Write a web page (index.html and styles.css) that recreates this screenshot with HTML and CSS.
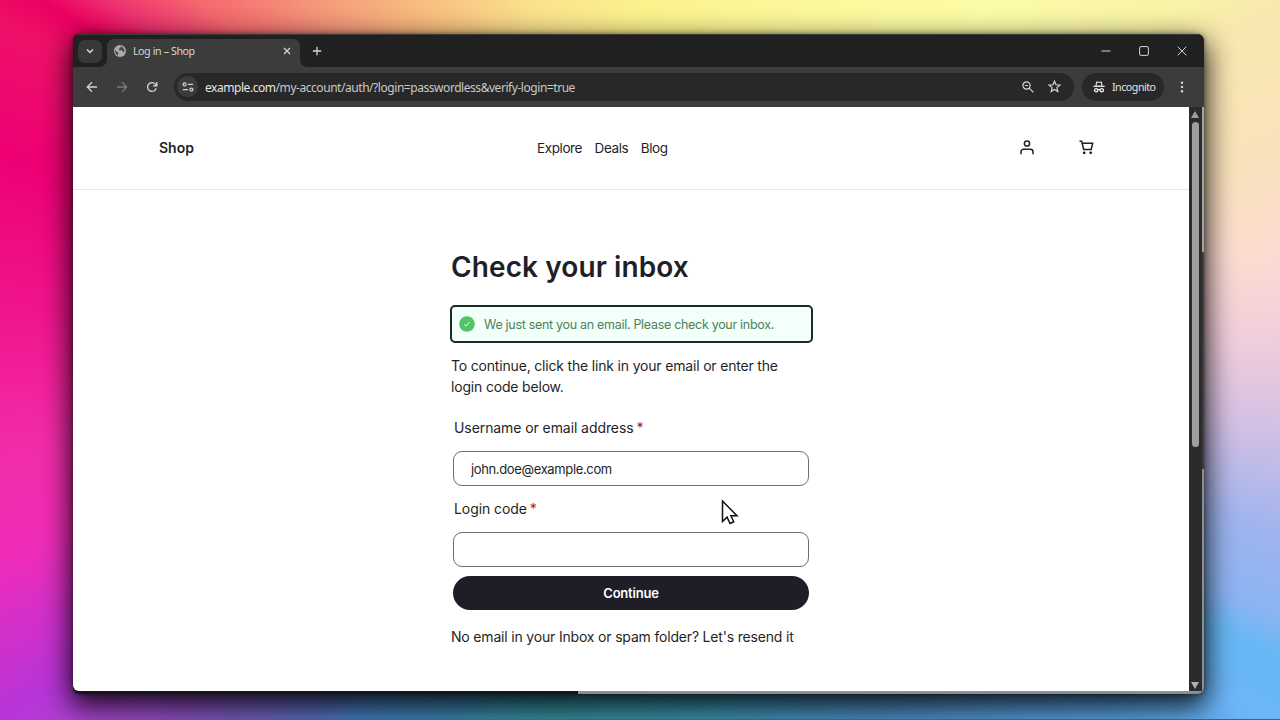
FILE: index.html
```html
<!DOCTYPE html>
<html lang="en">

<head>
    <meta charset="UTF-8">
    <meta name="viewport" content="width=device-width, initial-scale=1.0">
    <title>Log in – Shop</title>
    <link rel="stylesheet" href="styles.css">
</head>

<body>
    <div class="window">
        <div class="tab-strip">
            <div class="tab-search">
                <svg width="10" height="10" viewBox="0 0 10 10"><path d="M2 3.5l3 3 3-3" /></svg>
            </div>
            <div class="tab">
                <svg class="favicon" width="12" height="12" viewBox="0 0 12 12">
                    <circle cx="6" cy="6" r="6" />
                    <path d="M1.2 5.2l3 2.6v2.8A5 5 0 0 1 1.2 5.2zM6.6 1.2v1.4L4.8 4v1.2h3l1.2 1.6 1.4.4A5 5 0 0 0 6.6 1.2z" />
                </svg>
                <span class="tab-title">Log in – Shop</span>
                <svg class="tab-close" width="8" height="8" viewBox="0 0 8 8"><path d="M1 1l6 6M7 1L1 7" /></svg>
            </div>
            <svg class="new-tab" width="10" height="10" viewBox="0 0 10 10"><path d="M5 .8v8.4M.8 5h8.4" /></svg>
            <div class="window-buttons">
                <svg width="10" height="10" viewBox="0 0 10 10"><path d="M.5 5h9" /></svg>
                <svg width="10" height="10" viewBox="0 0 10 10"><rect x=".6" y=".6" width="8.8" height="8.8" rx="1.3" /></svg>
                <svg width="10" height="10" viewBox="0 0 10 10"><path d="M.7.7l8.6 8.6M9.3.7L.7 9.3" /></svg>
            </div>
        </div>

        <div class="toolbar">
            <div class="nav-buttons">
                <svg width="12" height="12" viewBox="0 0 12 12"><path d="M11 6H1.5M6 1.3L1.3 6 6 10.7" /></svg>
                <svg class="disabled" width="12" height="12" viewBox="0 0 12 12"><path d="M1 6h9.5M6 1.3L10.7 6 6 10.7" /></svg>
                <svg width="12" height="12" viewBox="0 0 12 12"><path d="M10.2 7.2A4.4 4.4 0 1 1 9.3 3.1L10.6 4.6M10.8 1v3.8H7" /></svg>
            </div>
            <div class="address-bar">
                <div class="site-info">
                    <svg width="12" height="10" viewBox="0 0 12 10">
                        <circle cx="2.6" cy="2.4" r="1.5" /><path d="M6 2.4h5" />
                        <path d="M1 7.6h5" /><circle cx="9.4" cy="7.6" r="1.5" />
                    </svg>
                </div>
                <span class="url"><b>example.com</b>/my-account/auth/?login=passwordless&amp;verify-login=true</span>
                <svg class="zoom-icon" width="12" height="12" viewBox="0 0 12 12"><circle cx="4.5" cy="4.5" r="3.6" /><path d="M7.2 7.2l4.2 4.2M3 4.5h3" /></svg>
                <svg class="star-icon" width="13" height="13" viewBox="0 0 13 13"><path d="M6.5 1.2l1.5 3.6 3.9.3-3 2.5.9 3.8-3.3-2-3.3 2 .9-3.8-3-2.5 3.9-.3z" /></svg>
            </div>
            <div class="incognito">
                <svg width="12" height="12" viewBox="0 0 12 12">
                    <path class="hat" d="M3.3.4h1.5l1.2.5 1.2-.5h1.5l1 4.4h2V6H.3V4.800h2zM4.200 1.800l-.7 2.600h5L7.800 1.800z" />
                    <circle cx="3.200" cy="9.200" r="1.6" /><circle cx="8.800" cy="9.200" r="1.6" /><path d="M4.800 8.800q1.200-.8 2.400 0" />
                </svg>
                <span>Incognito</span>
            </div>
            <svg class="menu" width="4" height="12" viewBox="0 0 4 12"><circle cx="2" cy="1.700" r="1.200" /><circle cx="2" cy="6" r="1.200" /><circle cx="2" cy="10.300" r="1.200" /></svg>
        </div>

        <div class="content">
            <div class="page">
                <header class="site-header">
                    <a class="brand">Shop</a>
                    <nav class="site-nav">
                        <a>Explore</a>
                        <a>Deals</a>
                        <a>Blog</a>
                    </nav>
                    <div class="site-icons">
                        <svg width="14" height="15" viewBox="0 0 14 15"><circle cx="7" cy="3.500" r="2.600" /><path d="M1 14.200v-2.400a2.600 2.600 0 0 1 2.600-2.600h6.800a2.600 2.600 0 0 1 2.600 2.600v2.400" /></svg>
                        <svg width="15" height="15" viewBox="0 0 15 15"><path d="M.5 1.200h2.200l2 8.300h7.500l1.500-6.300H3.300" /><circle class="wheel" cx="5.200" cy="12.800" r="1.400" /><circle class="wheel" cx="11.700" cy="12.800" r="1.400" /></svg>
                    </div>
                </header>

                <main class="login">
                    <h1>Check your inbox</h1>
                    <div class="notice">
                        <svg width="16" height="16" viewBox="0 0 16 16"><circle cx="8" cy="8" r="7.800" /><path d="M5.300 8.500l1.700 1.600 3.600-4.200" /></svg>
                        <span>We just sent you an email. Please check your inbox.</span>
                    </div>
                    <p class="intro">To continue, click the link in your email or enter the<br>login code below.</p>
                    <form class="login-form">
                        <label for="username">Username or email address <i>*</i></label>
                        <input id="username" type="text" value="john.doe@example.com">
                        <label for="code">Login code <i>*</i></label>
                        <input id="code" type="text">
                        <button type="button">Continue</button>
                    </form>
                    <p class="resend">No email in your Inbox or spam folder? Let's resend it</p>
                </main>
            </div>
            <div class="scrollbar">
                <div class="arrow-up"></div>
                <div class="thumb"></div>
                <div class="arrow-down"></div>
            </div>
        </div>
    </div>

    <svg class="cursor" width="18" height="26" viewBox="0 0 18 26"><path d="M1.500 2v20.500l4.600-4.400 2.900 6.400 3.700-1.700-2.800-6h6.100z" /></svg>
</body>

</html>
```
FILE: styles.css
```css
* {
    box-sizing: border-box;
}

body {
    margin: 0;
    width: 1280px;
    height: 720px;
    overflow: hidden;
    padding: 34px 0 0 73px;
    font-family: 'Inter', 'Liberation Sans', sans-serif;
    color: #1f1f28;
    background:
        conic-gradient(at 640px 360px,
            #fbf28c 0deg, #fcfca6 45deg, #f8f3a6 57deg, #f8e8b0 61deg, #fae2bc 72deg,
            #fcdcd0 80deg, #f4cfda 87deg, #d4c0e4 96deg, #a0b4ee 105deg, #8ab4f4 112deg,
            #66b8f4 115deg, #6cb6f8 120deg, #5aa4e4 126deg, #4f90c8 144deg, #3a96b0 170deg,
            #3593a0 195deg, #4480c0 218deg, #7a5cc0 229deg, #a84ad0 236deg, #b834d8 241deg,
            #cf30cc 246deg, #f02cb8 253deg, #f22ca8 262deg, #f0148c 275deg, #ee0074 288deg,
            #ee1068 298deg, #ec0060 301deg, #ee3070 304deg, #f4686e 309deg, #f4967a 317deg,
            #f6b87c 326deg, #fae08c 342deg, #fbf28c 360deg);
}

/* thin green line along the bottom of the wallpaper */
body::after {
    content: "";
    position: absolute;
    left: 0;
    top: 719px;
    width: 1280px;
    height: 1px;
    background: linear-gradient(90deg, transparent 60px, #1f7a64 220px);
}

svg {
    fill: none;
    stroke: currentColor;
    flex: none;
    display: block;
}

/* browser window */
.window {
    width: 1131px;
    height: 660px;
    border-radius: 7px;
    overflow: hidden;
    display: flex;
    flex-direction: column;
    background:
        linear-gradient(#939598, #85878a) 505px 657px / 626px 3px no-repeat,
        linear-gradient(#a5a5a3 0 145px, #3c3c3c 145px 362px, #8b8d90 362px) 1129px 73px / 2px 587px no-repeat,
        #15161c;
    box-shadow: 0 10px 28px 3px rgba(0, 0, 0, 0.85), 0 0 5px rgba(0, 0, 0, 0.45);
}

.tab-strip,
.toolbar {
    font-family: 'Noto Sans', sans-serif;
    color: #d6d6d6;
    display: flex;
    align-items: center;
    flex: none;
}

.tab-strip {
    height: 33px;
    background: #202020;
    border-top: 1px solid #3b3b3b;
    padding-left: 5px;
}

.tab-search {
    width: 24px;
    height: 23px;
    border-radius: 7px;
    background: #383838;
    display: flex;
    align-items: center;
    justify-content: center;
}

.tab-search svg {
    stroke-width: 1.5;
}

.tab {
    position: relative;
    width: 193px;
    height: 28px;
    margin-left: 5px;
    padding: 0 9px 4px 7px;
    align-self: flex-end;
    display: flex;
    align-items: center;
    background: #3c3c3c;
    border-radius: 7px 7px 0 0;
}

.tab::before,
.tab::after {
    content: "";
    position: absolute;
    bottom: 0;
    width: 7px;
    height: 7px;
}

.tab::before {
    left: -7px;
    background: radial-gradient(circle at 0 0, transparent 6.5px, #3c3c3c 7px);
}

.tab::after {
    right: -7px;
    background: radial-gradient(circle at 100% 0, transparent 6.5px, #3c3c3c 7px);
}

.favicon {
    stroke: none;
}

.favicon circle {
    fill: #a9abad;
}

.favicon path {
    fill: #4a4a4a;
}

.tab-title {
    margin-left: 7px;
    flex: 1;
    font-size: 10.7px;
    line-height: 14px;
    letter-spacing: -0.5px;
    word-spacing: 0.3px;
}

.tab-close {
    stroke-width: 1.3;
}

.new-tab {
    margin-left: 12px;
    stroke-width: 1.3;
}

.window-buttons {
    margin-left: auto;
    margin-right: 17px;
    display: flex;
    gap: 28px;
}

.toolbar {
    height: 40px;
    padding: 0 17px 1px 13px;
    background: #3c3c3c;
}

.nav-buttons {
    display: flex;
    gap: 18px;
    stroke-width: 1.3;
}

.disabled {
    color: #7b7b7b;
}

.address-bar {
    width: 900px;
    height: 28px;
    margin-left: 16px;
    padding: 0 13px 0 3px;
    border-radius: 14px;
    background: #282828;
    display: flex;
    align-items: center;
}

.site-info {
    width: 21px;
    height: 21px;
    border-radius: 50%;
    background: #3c3c3c;
    display: flex;
    align-items: center;
    justify-content: center;
}

.site-info svg {
    stroke-width: 1.2;
}

.url {
    flex: 1;
    margin-left: 7px;
    padding-top: 1px;
    font-size: 12px;
    letter-spacing: -0.45px;
    color: #c9c9c9;
    white-space: nowrap;
}

.url b {
    font-weight: 400;
    color: #e6e6e6;
}

.zoom-icon,
.star-icon {
    stroke-width: 1.2;
}

.star-icon {
    margin-left: 14px;
}

.incognito {
    width: 82px;
    height: 28px;
    margin-left: 8px;
    padding-left: 11px;
    border-radius: 14px;
    background: #282828;
    display: flex;
    align-items: center;
    gap: 7px;
    font-size: 10.7px;
    letter-spacing: -0.5px;
    color: #e3e3e3;
}

.incognito svg {
    stroke-width: 1.4;
}

.hat {
    fill: currentColor;
    fill-rule: evenodd;
    stroke: none;
}

.menu {
    margin-left: auto;
    margin-right: 3px;
    fill: #d6d6d6;
    stroke: none;
}

.content {
    height: 584px;
    display: flex;
}

.page {
    width: 1116px;
    background: #fff;
    border-radius: 0 0 0 6px;
}

.scrollbar {
    width: 13px;
    background: #2b2b2b;
    display: flex;
    flex-direction: column;
    align-items: center;
    padding: 4px 1px 2px 0;
}

.arrow-up,
.arrow-down {
    width: 0;
    height: 0;
    border: 4px solid transparent;
}

.arrow-up {
    border-top: 0;
    border-bottom: 7px solid #9f9f9f;
}

.arrow-down {
    margin-top: auto;
    border-bottom: 0;
    border-top: 7px solid #b0b0b0;
}

.thumb {
    width: 7px;
    height: 325px;
    margin-top: 4px;
    border-radius: 4px;
    background: #9f9f9f;
}

/* shop page */
.site-header {
    height: 83px;
    padding: 0 95px 1px 86px;
    border-bottom: 1px solid #e6e6e6;
    display: grid;
    grid-template-columns: 378px 1fr auto;
    align-items: center;
    font-size: 13.5px;
}

.brand {
    font-size: 14px;
    font-weight: 600;
}

.site-nav {
    display: flex;
    gap: 12.5px;
    letter-spacing: -0.4px;
}

.site-icons {
    display: flex;
    gap: 45px;
    stroke-width: 1.5;
}

.wheel {
    fill: currentColor;
    stroke: none;
}

.login {
    width: 362px;
    margin: 58px 0 0 377px;
    font-size: 14px;
    letter-spacing: -0.18px;
}

h1 {
    margin: 0;
    padding-left: 1px;
    font-size: 28px;
    line-height: 38px;
    font-weight: 600;
    letter-spacing: 0.1px;
}

.notice {
    width: 363px;
    height: 38px;
    margin-top: 19px;
    padding: 0 7px;
    border: 2px solid #1b2b26;
    border-radius: 5px;
    background: #f3fff9;
    display: flex;
    align-items: center;
    gap: 9px;
    font-size: 12.5px;
    letter-spacing: -0.3px;
    color: #4d8159;
    white-space: nowrap;
}

.notice svg {
    stroke: #e8fff0;
}

.notice circle {
    fill: #52c468;
    stroke: none;
}

.intro,
.resend {
    margin: 12px 0 0 1px;
    line-height: 21px;
    white-space: nowrap;
}

.login-form {
    width: 356px;
    margin: 20px 0 0 3px;
    display: flex;
    flex-direction: column;
}

label {
    height: 22px;
    line-height: 22px;
    margin-bottom: 12px;
    padding-left: 1px;
    letter-spacing: -0.08px;
}

label i {
    color: #a31a2a;
    font-style: normal;
    margin-left: -1px;
}

input {
    height: 35px;
    padding: 0 17px;
    border: 1px solid #6e6e74;
    border-radius: 9px;
    margin: 0 0 12px;
    font: 13px 'Inter', sans-serif;
    letter-spacing: -0.36px;
    color: #1f1f28;
}

button {
    height: 34px;
    margin-top: -3px;
    padding: 0;
    border: 0;
    border-radius: 17px;
    background: #1e1d28;
    color: #fff;
    font: 600 13px 'Inter', sans-serif;
    letter-spacing: -0.2px;
}

.resend {
    margin-top: 16px;
}

.cursor {
    position: absolute;
    left: 721px;
    top: 499px;
    fill: #fff;
    stroke: #111;
    stroke-width: 1.5;
}
```
